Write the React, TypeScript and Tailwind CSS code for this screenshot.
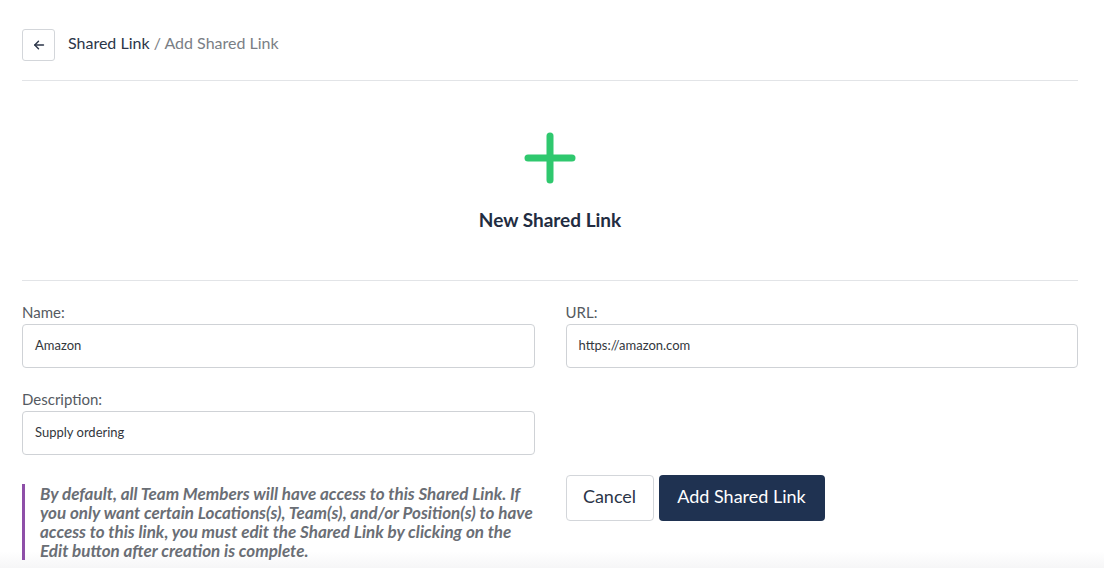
import React from "react"

const font = { fontFamily: "Lato, 'Open Sans', sans-serif" }

function Field({ label, value }: { label: string; value: string }) {
  return (
    <div className="flex flex-col">
      <label className="text-[15px] leading-[18px] text-[#555a61] mb-[3px]">{label}</label>
      <div className="h-[44px] rounded-[4px] border border-[#cfd2d6] bg-white px-[12px] flex items-center text-[13px] text-[#33373d]">
        {value}
      </div>
    </div>
  )
}

export default function App() {
  return (
    <div style={font} className="min-h-[568px] w-full bg-white pl-[22px] pr-[26px] pt-[29px] overflow-hidden bg-gradient-to-b from-white from-[97%] to-[#f6f6f7]">
      {/* Header */}
      <div className="flex items-center gap-[13px] h-[32px]">
        <button className="w-[33px] h-[32px] rounded-[3px] border border-[#d3d6da] bg-white flex items-center justify-center text-[#2b3548]">
          <svg width="12" height="12" viewBox="0 0 12 12" fill="none" stroke="currentColor" strokeWidth="1.4" strokeLinecap="round" strokeLinejoin="round">
            <path d="M10.5 6H1.8" />
            <path d="M5.5 2.2 1.8 6l3.7 3.8" />
          </svg>
        </button>
        <div className="text-[16px] leading-[20px] -mt-[4px]">
          <span className="text-[#2b3548]">Shared Link</span>
          <span className="text-[#7a7e85]"> / Add Shared Link</span>
        </div>
      </div>

      <div className="mt-[19px] border-t border-[#e2e4e7]" />

      {/* Hero */}
      <div className="flex flex-col items-center pt-[51px] h-[199px]">
        <svg width="52" height="52" viewBox="0 0 52 52" fill="none" stroke="#2fc86e" strokeWidth="7" strokeLinecap="round">
          <path d="M26 4v44" />
          <path d="M4 26h44" />
        </svg>
        <div className="mt-[24px] text-[19px] leading-[24px] font-bold text-[#222c41]">New Shared Link</div>
      </div>

      <div className="border-t border-[#e2e4e7]" />

      {/* Form */}
      <div className="grid grid-cols-2 gap-x-[31px] pt-[22px]">
        <div className="flex flex-col gap-[22px]">
          <Field label="Name:" value="Amazon" />
          <Field label="Description:" value="Supply ordering" />
        </div>
        <div className="flex flex-col">
          <Field label="URL:" value="https://amazon.com" />
        </div>

        <div className="mt-[29px] border-l-[3px] border-[#8e4fa8] pl-[15px]">
          <p className="text-[17px] leading-[19px] italic font-bold text-[#6a6e75] whitespace-nowrap">
            By default, all Team Members will have access to this Shared Link. If
            <br />
            you only want certain Locations(s), Team(s), and/or Position(s) to have
            <br />
            access to this link, you must edit the Shared Link by clicking on the
            <br />
            Edit button after creation is complete.
          </p>
        </div>
        <div className="mt-[20px] flex items-start gap-[5px]">
          <button className="h-[46px] w-[88px] rounded-[4px] border border-[#d3d6da] bg-white text-[18px] text-[#2b3548] pb-[3px]">
            Cancel
          </button>
          <button className="h-[46px] w-[166px] rounded-[4px] bg-[#1f3251] text-[18px] text-white pb-[3px]">
            Add Shared Link
          </button>
        </div>
      </div>
    </div>
  )
}
